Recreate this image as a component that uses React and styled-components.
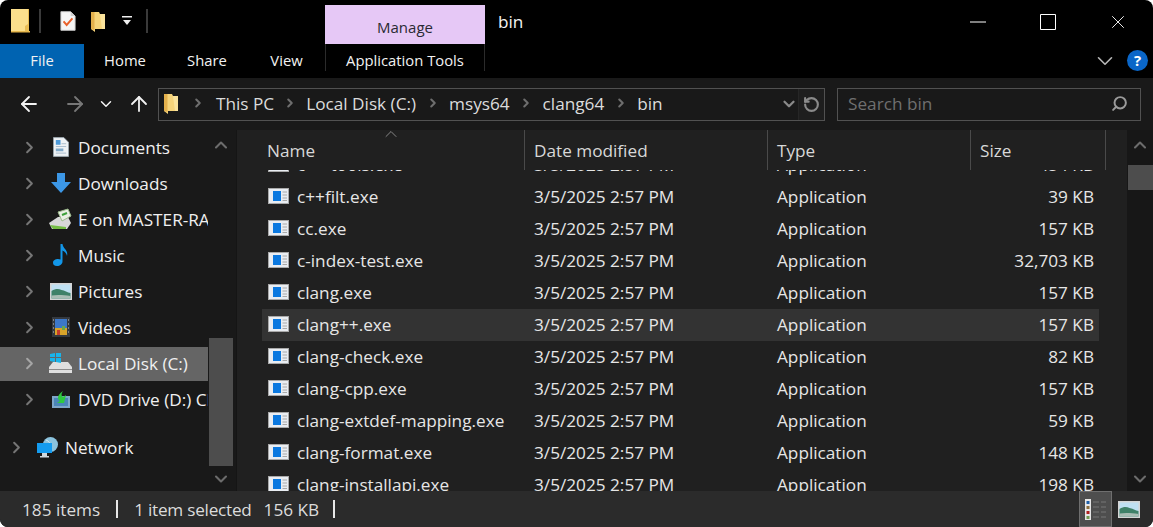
import React from "react";
import styled, { createGlobalStyle } from "styled-components";
import { ArrowLeft, ArrowRight, ArrowUp, ChevronDown, ChevronRight, ChevronUp, RotateCcw, Search, X } from "lucide-react";

const Global = createGlobalStyle`
  html, body { margin: 0; padding: 0; background: #fff; }
  * { box-sizing: border-box; }
`;

const Window = styled.div`
  width: 1153px;
  height: 527px;
  display: flex;
  flex-direction: column;
  overflow: hidden;
  border-radius: 8px;
  background: #000;
  color: #f0f0f0;
  font-family: "Open Sans", "Noto Sans", sans-serif;
  font-size: 17.2px;
`;

const TitleBar = styled.div`
  height: 44px;
  display: flex;
  flex: none;
`;

const Quick = styled.div`
  width: 325px;
  height: 42px;
  display: flex;
  align-items: center;
  padding-left: 11px;
`;

const QuickDivider = styled.span`
  width: 2px;
  height: 24px;
  margin: ${(p) => p.$margin};
  background: #3a3a3a;
`;

const QuickGap = styled.span`
  width: ${(p) => p.$w}px;
`;

const ManageTab = styled.div`
  width: 160px;
  margin-top: 5px;
  background: #e6c8f6;
  color: #2a2a33;
  font-size: 15px;
  display: flex;
  align-items: center;
  justify-content: center;
  padding-top: 4px;
`;

const WindowTitle = styled.div`
  margin: 6px 0 0 13px;
  height: 32px;
  line-height: 32px;
  color: #f4f4f4;
`;

const WindowButtons = styled.div`
  margin-left: auto;
  display: flex;
  color: #fff;
`;

const WindowButton = styled.div`
  width: 70px;
  height: 43px;
  display: flex;
  align-items: center;
  justify-content: center;
`;

const Ribbon = styled.div`
  height: 34px;
  flex: none;
  display: flex;
  align-items: stretch;
  font-size: 14.8px;
`;

const RibbonTab = styled.div`
  width: ${(p) => p.$w}px;
  display: flex;
  align-items: center;
  justify-content: center;
  padding-bottom: 2px;
  background: ${(p) => (p.$file ? "#0063b1" : "transparent")};
  color: #f2f2f2;
`;

const ToolsTab = styled(RibbonTab)`
  background:
    linear-gradient(#2b2b2b, #2b2b2b) left top / 1px 27px no-repeat,
    linear-gradient(#2b2b2b, #2b2b2b) right top / 1px 27px no-repeat;
`;

const RibbonRight = styled.div`
  margin-left: auto;
  display: flex;
  align-items: center;
  gap: 9px;
  padding: 0 5px 1px 0;
  color: #b5b5b5;
`;

const HelpBadge = styled.div`
  width: 21px;
  height: 21px;
  border-radius: 50%;
  background: #0a66c8;
  color: #fff;
  font-size: 15px;
  font-weight: 700;
  text-align: center;
  line-height: 21px;
`;

const AddressRow = styled.div`
  height: 52px;
  flex: none;
  display: flex;
  align-items: center;
  background: #191919;
  color: #e8e8e8;
`;

const NavButtons = styled.div`
  width: 158px;
  display: flex;
  align-items: center;
  padding-left: 17px;
`;

const NavButton = styled.div`
  width: ${(p) => p.$w}px;
  display: flex;
  color: ${(p) => p.$color || "#f2f2f2"};
`;

const AddressBox = styled.div`
  width: 667px;
  height: 33px;
  display: flex;
  align-items: center;
  border: 1px solid #515151;
  padding: 0 0 2px 5px;
  color: #dcdcdc;
`;

const Crumb = styled.span`
  white-space: nowrap;
`;

const CrumbArrow = styled.span`
  display: flex;
  width: ${(p) => p.$w}px;
  justify-content: center;
  color: #6e6e6e;
`;

const AddressTail = styled.div`
  margin: 0 0 -2px auto;
  height: calc(100% + 2px);
  display: flex;
  align-items: center;
  color: #8a8a8a;
`;

const RefreshSlot = styled.div`
  width: 26px;
  height: 100%;
  display: flex;
  align-items: center;
  justify-content: center;
  background: #1e1e1e;
  border-left: 1px solid #262626;
`;

const SearchBox = styled.div`
  width: 304px;
  height: 33px;
  margin-left: 12px;
  display: flex;
  align-items: center;
  justify-content: space-between;
  border: 1px solid #515151;
  padding: 0 12px 2px 10px;
  color: #6f6f6f;
`;

const SearchGlyph = styled(Search)`
  transform: scaleX(-1);
  color: #9a9a9a;
`;

const Main = styled.div`
  flex: 1;
  min-height: 0;
  display: flex;
`;

const NavPane = styled.div`
  width: 237px;
  flex: none;
  display: flex;
  background: #191919;
  border-right: 1px solid #151515;
`;

const NavList = styled.div`
  width: 208px;
  flex: none;
  overflow: hidden;
`;

const NavRow = styled.div`
  height: ${(p) => (p.$selected ? 34 : 36)}px;
  margin: ${(p) => (p.$selected ? "1px 0" : p.$net ? "12px 0 0" : "0")};
  display: flex;
  align-items: center;
  padding-left: ${(p) => (p.$net ? 11 : 24)}px;
  padding-bottom: 2px;
  background: ${(p) => (p.$selected ? "#656565" : "transparent")};
  color: #f0f0f0;
  white-space: nowrap;
`;

const Expander = styled.span`
  display: flex;
  flex: none;
  width: 23px;
  margin-left: -4px;
  color: ${(p) => (p.$selected ? "#a5a5a5" : "#757575")};
`;

const NavIconSlot = styled.span`
  display: flex;
  flex: none;
  width: 35px;
  justify-content: center;
`;

const NavScroll = styled.div`
  width: 24px;
  margin-left: 1px;
  display: flex;
  flex-direction: column;
  align-items: center;
  color: #6c6c6c;
`;

const ScrollEnd = styled.div`
  height: ${(p) => p.$h}px;
  flex: none;
  margin-top: ${(p) => (p.$bottom ? "auto" : "0")};
  display: flex;
  align-items: center;
  justify-content: center;
`;

const NavThumb = styled.div`
  width: 24px;
  height: 128px;
  margin-top: ${(p) => p.$top}px;
  background: #4d4d4d;
`;

const ListPane = styled.div`
  flex: 1;
  min-width: 0;
  display: flex;
  flex-direction: column;
  background: #202020;
  color: #e6e6e6;
`;

const Header = styled.div`
  position: relative;
  height: 40px;
  flex: none;
  display: flex;
  color: #d8d8d8;
`;

const HeaderCell = styled.div`
  width: ${(p) => p.$w}px;
  height: 40px;
  padding: 9px 0 0 ${(p) => p.$pad}px;
  border-right: 1px solid #4a4a4a;
`;

const SortMark = styled.span`
  position: absolute;
  left: 144px;
  top: -6px;
  display: flex;
  color: #9a9a9a;
`;

const Rows = styled.div`
  flex: 1;
  min-height: 0;
  overflow: hidden;
  padding-left: 25px;
`;

const Row = styled.div`
  width: 837px;
  height: 32px;
  display: grid;
  grid-template-columns: 272px 243px 203px 119px;
  align-items: center;
  padding-bottom: 2px;
  margin-top: ${(p) => (p.$first ? -21 : 0)}px;
  background: ${(p) => (p.$hover ? "#333333" : "transparent")};
`;

const NameCell = styled.div`
  display: flex;
  align-items: center;
  padding-left: 6px;
  white-space: nowrap;
`;

const FileName = styled.span`
  margin-left: 8px;
`;

const SizeCell = styled.div`
  text-align: right;
  padding-right: 5px;
`;

const ListScroll = styled.div`
  width: 26px;
  flex: none;
  display: flex;
  flex-direction: column;
  background: #171717;
  color: #6c6c6c;
`;

const ListThumb = styled.div`
  height: 25px;
  margin: 5px 0 0 1px;
  background: #4d4d4d;
`;

const StatusBar = styled.div`
  height: 36px;
  flex: none;
  display: flex;
  align-items: center;
  background: #2b2b2b;
  color: #dcdcdc;
  padding-left: 22px;
`;

const StatusBarLine = styled.span`
  width: 2px;
  height: 18px;
  margin: ${(p) => p.$margin};
  background: #e8e8e8;
`;

const StatusSelection = styled.span`
  letter-spacing: -0.25px;
  margin-right: 12px;
`;

const StatusViews = styled.div`
  margin-left: auto;
  height: 100%;
  display: flex;
  align-items: center;
  padding-right: 8px;
`;

const ViewButton = styled.div`
  width: 33px;
  height: 100%;
  display: flex;
  align-items: center;
  justify-content: center;
  background: ${(p) => (p.$active ? "#4e4e4e" : "transparent")};
  border: 1px solid ${(p) => (p.$active ? "#6f6f6f" : "transparent")};
`;

const MinimizeGlyph = () => (
  <svg width="16" height="2" viewBox="0 0 16 2"><path d="M0 1h16" stroke="#fff" /></svg>
);

const MaximizeGlyph = () => (
  <svg width="16" height="16" viewBox="0 0 16 16"><path d="M.5.500h15v15H.5z" fill="none" stroke="#fff" /></svg>
);

const FolderBig = () => (
  <svg width="20" height="24" viewBox="0 0 20 24">
    <path d="M0 0h18v23H0z" fill="#fbdf8c" />
    <path d="M18 0v23h-4v-6l3-2V0z" fill="#e9bd55" />
    <path d="M0 22h19v1.500H0z" fill="#e5b64c" />
  </svg>
);

const FolderSmall = () => (
  <svg width="15" height="21" viewBox="0 0 15 21">
    <path d="M0 1h8l1 2h5v15H4v3l-4-3z" fill="#f6d47a" />
    <path d="M0 1h3.500v18L0 18z" fill="#e3b04c" />
    <path d="M9 3h5v15h-3z" fill="#fbe39c" />
  </svg>
);

const ChecklistIcon = () => (
  <svg width="16" height="20" viewBox="0 0 18 22">
    <path d="M1 .5h11l5 5V21.500H1z" fill="#f5f5f5" stroke="#c9c9c9" />
    <path d="M12 .5v5h5z" fill="#cfcfcf" />
    <path d="M4 11.500l3.500 4L14 8" fill="none" stroke="#e9602a" strokeWidth="2.2" />
  </svg>
);

const QuickDrop = () => (
  <svg width="10" height="10" viewBox="0 0 10 10">
    <path d="M0 0h10v1.500H0z" fill="#f0f0f0" />
    <path d="M1 4h8L5 9z" fill="#f0f0f0" />
  </svg>
);

const ExeIcon = () => (
  <svg width="21" height="16" viewBox="0 0 21 16">
    <path d="M0 0h21v16H0z" fill="#a9a9a9" />
    <path d="M1 1h19v14H1z" fill="#e9edf2" />
    <path d="M5 3h8v10H5z" fill="#0a78e0" />
    <path d="M14.500 4H19M14.500 7H19M14.500 10H19M14.500 12.500H19" stroke="#a8a8a8" />
  </svg>
);

const DocIcon = () => (
  <svg width="16" height="20" viewBox="0 0 17 21">
    <path d="M.5.500h11l5 5V20.500H.5z" fill="#eef2f5" stroke="#9aa5ad" />
    <path d="M3 3h5v5H3z" fill="#4d9ad9" />
    <path d="M9 7h5M3 10h11M3 17h11" stroke="#a9bccb" />
    <path d="M3 12h8v3H3z" fill="#7fa9c9" />
  </svg>
);

const DownIcon = () => (
  <svg width="20" height="20" viewBox="0 0 20 20">
    <path d="M6 0h8v9h6L10 20 0 9h6z" fill="#3c97e6" />
  </svg>
);

const NetDriveIcon = () => (
  <svg width="24" height="22" viewBox="0 0 24 22">
    <path d="M0 15l9-6h10l3 6-4 6H3z" fill="#d8d8d8" />
    <path d="M1 17l16 2v2H4z" fill="#75bd45" />
    <path d="M9 4l10-3 3 7-9 5z" fill="#e9efe4" stroke="#9dbb8c" />
    <path d="M13 7l5-2" stroke="#3da13a" strokeWidth="2" />
  </svg>
);

const NoteIcon = () => (
  <svg width="16" height="22" viewBox="0 0 16 22">
    <path d="M7.500 0h2c.5 5 6 6 4.500 12-.5-2.500-2-4.500-4.500-5.500V17.500c0 2.500-2.500 4.500-5.500 4.500S0 20.500 0 18.500s2.500-3.500 5-3.500c1 0 2 .2 2.500.5z" fill="#1296e8" />
  </svg>
);

const PictureIcon = () => (
  <svg width="22" height="17" viewBox="0 0 22 17">
    <path d="M0 0h22v17H0z" fill="#d6d6d6" />
    <path d="M1.500 1.500h19v14h-19z" fill="#bfe0f2" />
    <path d="M1.500 8c4-2.500 7-2.500 10-1 3 .5 6 2.500 9 3v5.500h-19z" fill="#3f8168" />
    <path d="M1.500 12.500c6-1 12-.5 19 .5v2.500h-19z" fill="#a9bdb4" />
  </svg>
);

const VideoIcon = () => (
  <svg width="18" height="20" viewBox="0 0 18 20">
    <path d="M0 0h18v20H0z" fill="#34393f" />
    <path d="M3 2h12v16H3z" fill="#3d78c9" />
    <path d="M3 11h12v7H3z" fill="#d8a42a" />
    <path d="M5 13h3v5H5z" fill="#c43b2b" />
    <path d="M10 9h3v4h-3z" fill="#6aa84a" />
    <path d="M1 3h1M1 7h1M1 11h1M1 15h1M16 3h1M16 7h1M16 11h1M16 15h1" stroke="#c9c9c9" />
  </svg>
);

const DiskIcon = () => (
  <svg width="23" height="20" viewBox="0 0 23 20">
    <path d="M0 14l4-5h15l4 5v6H0z" fill="#dfdfdf" />
    <path d="M0 16h23v1H0z" fill="#8c8c8c" />
    <path d="M1 1l5-1v4H1zM7 0l5-1v5H7zM1 5h5v4l-5-1zM7 5h5v5l-5-1z" fill="#19b4ea" />
  </svg>
);

const DvdIcon = () => (
  <svg width="18" height="18" viewBox="0 0 18 18">
    <path d="M0 6h18v12H0z" fill="#7ea6c9" />
    <path d="M2 8h14v8H2z" fill="#4b86b8" />
    <path d="M8 11C5 9 5 5 11 1c-2 3-2 5 0 6l3-2-2 8H5z" fill="#2ec93f" />
  </svg>
);

const NetworkIcon = () => (
  <svg width="21" height="21" viewBox="0 0 21 21">
    <circle cx="13.500" cy="7.500" r="7.500" fill="#8bc3de" />
    <path d="M9 3c3 1 5 4 4 7" stroke="#d6ecf5" fill="none" />
    <path d="M0 6h15v10H0z" fill="#149cf0" />
    <path d="M5 16h5v3h2v1.500H3V19h2z" fill="#cfd8de" />
  </svg>
);

const DetailsViewIcon = () => (
  <svg width="21" height="21" viewBox="0 0 21 21">
    <path d="M0 0h6v21H0z" fill="#e6e6e6" />
    <path d="M1.500 2h3v3h-3z" fill="#1d5fa8" />
    <path d="M1.500 7h3v3h-3z" fill="#8a6d3b" />
    <path d="M1.500 12h3v3h-3z" fill="#b02020" />
    <path d="M1.500 17h3v3h-3z" fill="#6f9a50" />
    <path d="M8 3h6M16 3h5M8 8h6M16 8h5M8 13h6M16 13h5M8 18h6M16 18h5" stroke="#777" />
  </svg>
);

const nav = [
  [DocIcon, "Documents"],
  [DownIcon, "Downloads"],
  [NetDriveIcon, "E on MASTER-RAID"],
  [NoteIcon, "Music"],
  [PictureIcon, "Pictures"],
  [VideoIcon, "Videos"],
  [DiskIcon, "Local Disk (C:)", true],
  [DvdIcon, "DVD Drive (D:) CD_ROM"],
];

const files = [
  ["c++-tools.exe", "454 KB"],
  ["c++filt.exe", "39 KB"],
  ["cc.exe", "157 KB"],
  ["c-index-test.exe", "32,703 KB"],
  ["clang.exe", "157 KB"],
  ["clang++.exe", "157 KB"],
  ["clang-check.exe", "82 KB"],
  ["clang-cpp.exe", "157 KB"],
  ["clang-extdef-mapping.exe", "59 KB"],
  ["clang-format.exe", "148 KB"],
  ["clang-installapi.exe", "198 KB"],
];

const crumbs = ["This PC", "Local Disk (C:)", "msys64", "clang64", "bin"];

export default function App() {
  return (
    <Window>
      <Global />
      <TitleBar>
        <Quick>
          <FolderBig />
          <QuickDivider $margin="0 19px 0 8px" />
          <ChecklistIcon />
          <QuickGap $w={15} />
          <FolderSmall />
          <QuickGap $w={16} />
          <QuickDrop />
          <QuickDivider $margin="0 0 0 14px" />
        </Quick>
        <ManageTab>Manage</ManageTab>
        <WindowTitle>bin</WindowTitle>
        <WindowButtons>
          <WindowButton><MinimizeGlyph /></WindowButton>
          <WindowButton><MaximizeGlyph /></WindowButton>
          <WindowButton><X size={22} strokeWidth={1} /></WindowButton>
        </WindowButtons>
      </TitleBar>
      <Ribbon>
        <RibbonTab $w={84} $file>File</RibbonTab>
        <RibbonTab $w={82}>Home</RibbonTab>
        <RibbonTab $w={82}>Share</RibbonTab>
        <RibbonTab $w={77}>View</RibbonTab>
        <ToolsTab $w={160}>Application Tools</ToolsTab>
        <RibbonRight>
          <ChevronDown size={26} strokeWidth={1.5} />
          <HelpBadge>?</HelpBadge>
        </RibbonRight>
      </Ribbon>
      <AddressRow>
        <NavButtons>
          <NavButton $w={46}><ArrowLeft size={24} strokeWidth={1.8} /></NavButton>
          <NavButton $w={34} $color="#777"><ArrowRight size={24} strokeWidth={1.8} /></NavButton>
          <NavButton $w={30}><ChevronDown size={18} strokeWidth={2} /></NavButton>
          <NavButton $w={26}><ArrowUp size={24} strokeWidth={1.8} /></NavButton>
        </NavButtons>
        <AddressBox>
          <FolderSmall />
          <CrumbArrow $w={37}><ChevronRight size={14} strokeWidth={3.5} /></CrumbArrow>
          {crumbs.map((c, i) => (
            <React.Fragment key={c}>
              <Crumb>{c}</Crumb>
              {i < crumbs.length - 1 && (
                <CrumbArrow $w={i === 0 ? 32 : 33}><ChevronRight size={14} strokeWidth={3.5} /></CrumbArrow>
              )}
            </React.Fragment>
          ))}
          <AddressTail>
            <ChevronDown size={18} strokeWidth={3} />
            <RefreshSlot><RotateCcw size={17} strokeWidth={3} /></RefreshSlot>
          </AddressTail>
        </AddressBox>
        <SearchBox>
          Search bin
          <SearchGlyph size={17} strokeWidth={2.8} />
        </SearchBox>
      </AddressRow>
      <Main>
        <NavPane>
          <NavList>
            {nav.map(([Icon, label, selected]) => (
              <NavRow key={label} $selected={selected}>
                <Expander $selected={selected}><ChevronRight size={19} strokeWidth={2.5} /></Expander>
                <NavIconSlot><Icon /></NavIconSlot>
                {label}
              </NavRow>
            ))}
            <NavRow $net>
              <Expander><ChevronRight size={19} strokeWidth={2.5} /></Expander>
              <NavIconSlot><NetworkIcon /></NavIconSlot>
              Network
            </NavRow>
          </NavList>
          <NavScroll>
            <ScrollEnd $h={30}><ChevronUp size={20} strokeWidth={2.5} /></ScrollEnd>
            <NavThumb $top={178} />
            <ScrollEnd $h={25} $bottom><ChevronDown size={20} strokeWidth={2.5} /></ScrollEnd>
          </NavScroll>
        </NavPane>
        <ListPane>
          <Header>
            <SortMark><ChevronUp size={20} strokeWidth={1} /></SortMark>
            <HeaderCell $w={288} $pad={30}>Name</HeaderCell>
            <HeaderCell $w={243} $pad={9}>Date modified</HeaderCell>
            <HeaderCell $w={203} $pad={9}>Type</HeaderCell>
            <HeaderCell $w={135} $pad={9}>Size</HeaderCell>
          </Header>
          <Rows>
            {files.map(([name, size], i) => (
              <Row key={name} $first={i === 0} $hover={name === "clang++.exe"}>
                <NameCell><ExeIcon /><FileName>{name}</FileName></NameCell>
                <div>3/5/2025 2:57 PM</div>
                <div>Application</div>
                <SizeCell>{size}</SizeCell>
              </Row>
            ))}
          </Rows>
        </ListPane>
        <ListScroll>
          <ScrollEnd $h={30}><ChevronUp size={20} strokeWidth={2.5} /></ScrollEnd>
          <ListThumb />
          <ScrollEnd $h={25} $bottom><ChevronDown size={20} strokeWidth={2.5} /></ScrollEnd>
        </ListScroll>
      </Main>
      <StatusBar>
        185 items
        <StatusBarLine $margin="0 16px" />
        <StatusSelection>1 item selected</StatusSelection>
        156 KB
        <StatusBarLine $margin="0 0 0 14px" />
        <StatusViews>
          <ViewButton $active><DetailsViewIcon /></ViewButton>
          <ViewButton><PictureIcon /></ViewButton>
        </StatusViews>
      </StatusBar>
    </Window>
  );
}
